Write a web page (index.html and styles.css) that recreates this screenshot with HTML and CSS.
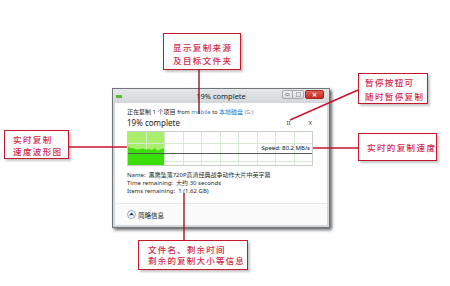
FILE: index.html
```html
<!DOCTYPE html>
<html>
<head>
<meta charset="utf-8">
<link rel="stylesheet" href="styles.css">
</head>
<body>
<div class="stage">
  <div class="window">
    <div class="titlebar">
      <span class="app-icon"></span>
      <span class="title">19% complete</span>
      <div class="controls">
        <span class="btn min"><i></i></span>
        <span class="btn max"><i></i></span>
        <span class="btn close">✕</span>
      </div>
    </div>
    <div class="client">
      <div class="content">
        <div class="line1">正在复制 1 个项目 <span class="lat">from</span> <span class="link">mobile</span> <span class="lat">to</span> <span class="link">本地磁盘</span> <span class="muted">(G:)</span></div>
        <div class="progress-row">
          <span class="pct">19% complete</span>
          <span class="actions"><span class="pause">II</span><span class="stop">X</span></span>
        </div>
        <div class="graph">
          <svg width="184" height="33" viewBox="0 0 184 33">
            <rect x="0" y="0" width="36" height="33" fill="#abee6c"/>
            <g stroke="#d5e9d4" stroke-width="1">
              <line x1="18.5" y1="0" x2="18.5" y2="33"/>
              <line x1="36.5" y1="0" x2="36.5" y2="33"/>
              <line x1="55.5" y1="0" x2="55.5" y2="33"/>
              <line x1="73.5" y1="0" x2="73.5" y2="33"/>
              <line x1="92.5" y1="0" x2="92.5" y2="33"/>
              <line x1="110.5" y1="0" x2="110.5" y2="33"/>
              <line x1="129.5" y1="0" x2="129.5" y2="33"/>
              <line x1="147.5" y1="0" x2="147.5" y2="33"/>
              <line x1="166.5" y1="0" x2="166.5" y2="33"/>
              <line x1="0" y1="11.5" x2="184" y2="11.5"/>
              <line x1="0" y1="29.5" x2="184" y2="29.5"/>
            </g>
            <path d="M0,33 L0,15 L3,16 L6,16.5 L9,17.5 L12,17 L15,16.5 L18,17.5 L21,17 L24,18 L27,16 L29,18.5 L31,18 L33,17 L36,16.5 L36,33 Z" fill="#3ade0a"/>
            <line x1="0" y1="21.5" x2="184" y2="21.5" stroke="#555a55" stroke-width="1"/>
          </svg>
          <span class="speed">Speed: 80.2 MB/s</span>
        </div>
        <div class="info">
          <div>Name:&nbsp; 黑鹰坠落720P高清经典战争动作大片中英字幕</div>
          <div>Time remaining:&nbsp; 大约 30 seconds</div>
          <div>Items remaining:&nbsp; 1 (1.62 GB)</div>
        </div>
      </div>
      <div class="footer">
        <span class="chev"><svg width="9" height="9" viewBox="0 0 9 9"><circle cx="4.5" cy="4.5" r="4" fill="#f4f8fb" stroke="#7c9cb8" stroke-width="0.8"/><path d="M2.6,5.4 L4.5,3.4 L6.4,5.4" fill="none" stroke="#1f3f60" stroke-width="1.1"/></svg></span>
        <span>简略信息</span>
      </div>
    </div>
  </div>

  <div class="callout c-top">显示复制来源<br>及目标文件夹</div>
  <div class="callout c-left">实时复制<br>速度波形图</div>
  <div class="callout c-pause">暂停按钮可<br>随时暂停复制</div>
  <div class="callout c-speed">实时的复制速度</div>
  <div class="callout c-bottom">文件名、剩余时间<br>剩余的复制大小等信息</div>

  <svg class="leaders" width="450" height="286" viewBox="0 0 450 286">
    <line x1="199" y1="70" x2="199" y2="114" stroke="#8e1820" stroke-width="1.4"/>
    <line x1="69" y1="147" x2="127" y2="147" stroke="#c8142c" stroke-width="1.4"/>
    <line x1="358" y1="90" x2="290" y2="120" stroke="#c8142c" stroke-width="1.4"/>
    <line x1="313" y1="148" x2="358" y2="148" stroke="#c8142c" stroke-width="1.4"/>
    <line x1="184" y1="193" x2="184" y2="240" stroke="#a8161f" stroke-width="1.4"/>
  </svg>
</div>
</body>
</html>
```

FILE: styles.css
```css
* { box-sizing: border-box; }
html, body { margin: 0; padding: 0; background: #ffffff; }
body { width: 450px; height: 286px; overflow: hidden; }

.stage { position: relative; width: 450px; height: 286px; }

/* dialog window placed on the desktop canvas */
.window {
  position: absolute;
  left: 112px;
  top: 88px;
  width: 218px;
  height: 140px;
  background: #d3d7da;
  border: 1px solid #6f7579;
  box-shadow: 2px 2px 3px rgba(0,0,0,0.6);
  display: flex;
  flex-direction: column;
  font-family: "Noto Sans", "Noto Sans CJK SC", sans-serif;
  color: #222;
}

.titlebar {
  height: 14px;
  display: grid;
  grid-template-columns: 1fr auto 1fr;
  align-items: center;
  background: linear-gradient(#e4e6e8, #d3d7da);
}
.app-icon {
  width: 6px;
  height: 4px;
  margin-left: 3px;
  background: #58b83a;
  border-top: 1px solid #e0f0c0;
}
.title {
  font-size: 7.5px;
  line-height: 10px;
  color: #1e1e1e;
}
.controls {
  justify-self: end;
  align-self: start;
  display: flex;
  margin-top: 1px;
  margin-right: 5px;
}
.btn {
  height: 9px;
  display: flex;
  align-items: center;
  justify-content: center;
}
.btn.min, .btn.max {
  width: 11px;
  background: linear-gradient(#f0f1f2, #d8dadc);
  border: 1px solid #a6aaad;
}
.btn.min { border-radius: 2px 0 0 2px; }
.btn.max { border-left: none; border-radius: 0 2px 2px 0; margin-right: 1px; }
.btn.min i { width: 5px; height: 3px; border: 1px solid #8d9296; border-radius: 2px; }
.btn.max i { width: 5px; height: 5px; border: 1px solid #b3b6b9; }
.btn.close {
  width: 19px;
  background: linear-gradient(#e2645a, #c22b22);
  border: 1px solid #a8261f;
  border-radius: 2px;
  color: #fff;
  font-size: 6px;
  font-weight: bold;
  line-height: 1;
}

.client {
  flex: 1;
  margin: 0 2px 2px;
  background: #fff;
  display: flex;
  flex-direction: column;
}

.content {
  padding: 4px 14px 8px 12px;
}
.line1 {
  font-size: 6px;
  line-height: 10px;
  white-space: nowrap;
  color: #222;
}
.line1 .lat { font-size: 5.5px; }
.link { color: #2d7ad6; }
.muted { color: #6b8fb8; font-size: 5.5px; }

.progress-row {
  display: flex;
  justify-content: space-between;
  align-items: center;
  height: 12px;
}
.pct { font-size: 8px; line-height: 12px; color: #1e1e1e; }
.actions {
  display: flex;
  gap: 18px;
  font-size: 6px;
  color: #333;
  padding-right: 1px;
}

.graph {
  position: relative;
  margin-top: 2px;
  width: 186px;
  height: 35px;
  border: 1px solid #c6d0c6;
}
.graph svg { display: block; }
.speed {
  position: absolute;
  right: 2px;
  top: 12px;
  font-size: 6px;
  line-height: 8px;
  color: #111;
  white-space: nowrap;
}

.info {
  margin-top: 5px;
  font-size: 6px;
  line-height: 8px;
  color: #2a2a2a;
  white-space: nowrap;
}

.footer {
  flex: 1;
  border-top: 1px solid #e6e7e8;
  background: #fbfbfb;
  display: flex;
  align-items: center;
  gap: 2px;
  padding-left: 12px;
  font-size: 6.5px;
  color: #222;
}
.chev { display: flex; }
.chev svg { display: block; }

/* annotation callouts on the canvas */
.callout {
  position: absolute;
  background: #fff;
  border: 1.5px solid #c4182a;
  box-shadow: 2px 2px 2px rgba(0,0,0,0.22);
  font-family: "Noto Sans CJK SC", sans-serif;
  font-size: 8.5px;
  font-weight: 500;
  letter-spacing: 1.4px;
  color: #d4264a;
  white-space: nowrap;
}
.c-top { left: 163px; top: 33px; width: 78px; height: 37px; padding: 7px 0 0 9px; line-height: 13px; }
.c-left { left: 4px; top: 130px; width: 65px; height: 29px; padding: 2px 0 0 8px; line-height: 12px; }
.c-pause { left: 358px; top: 73px; width: 70px; height: 31px; padding: 1px 0 0 6px; line-height: 14px; }
.c-speed { left: 358px; top: 133px; width: 79px; height: 28px; padding: 0 0 0 8px; line-height: 26px; }
.c-bottom { left: 138px; top: 240px; width: 110px; height: 30px; padding: 3px 0 0 9px; line-height: 11px; letter-spacing: 1.2px; }

.leaders { position: absolute; left: 0; top: 0; pointer-events: none; }
```
